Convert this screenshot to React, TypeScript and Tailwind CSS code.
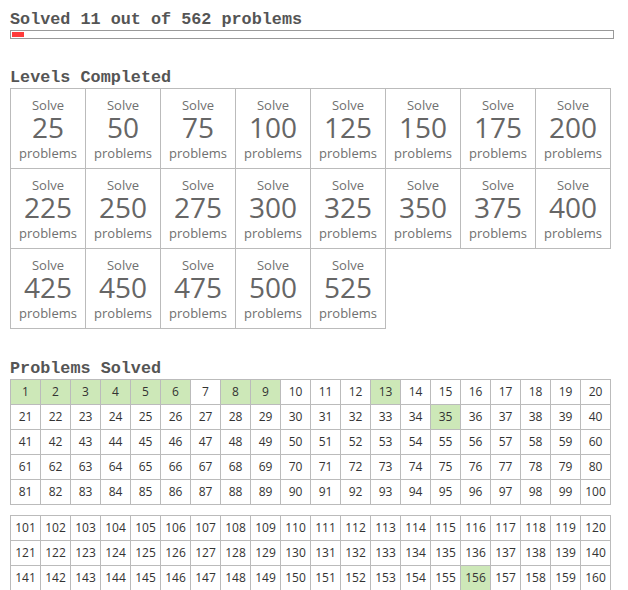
import React from "react";

const levels = [25, 50, 75, 100, 125, 150, 175, 200, 225, 250, 275, 300, 325, 350, 375, 400, 425, 450, 475, 500, 525];
const solved = new Set([1, 2, 3, 4, 5, 6, 8, 9, 13, 35, 156]);

function ProblemGrid({ from, to }: { from: number; to: number }) {
  const nums: number[] = [];
  for (let i = from; i <= to; i++) nums.push(i);
  return (
    <div className="grid w-[601px] grid-cols-[repeat(20,30px)] border-l border-t border-[#bbbbbb]">
      {nums.map((n) => (
        <div
          key={n}
          className={`flex h-[25px] items-center justify-center border-b border-r border-[#bbbbbb] text-[12px] text-[#333333] ${
            solved.has(n) ? "bg-[#cde8b8]" : "bg-white"
          }`}
        >
          {n}
        </div>
      ))}
    </div>
  );
}

export default function App() {
  const heading = "font-['Liberation_Mono','Courier_New',monospace] font-bold text-[16.8px] leading-[19px] text-[#555555]";
  return (
    <div className="min-h-[590px] bg-white px-[10px] pt-[10px] font-['Open_Sans',sans-serif]">
      <div className={heading}>Solved 11 out of 562 problems</div>
      <div className="mt-px h-[9px] w-[604px] border border-[#999999] p-px">
        <div className="h-full bg-[#ff3b3b]" style={{ width: `${Math.round((11 / 562) * 600)}px` }} />
      </div>

      <div className={`${heading} mt-[29px]`}>Levels Completed</div>
      <div className="mt-px w-[601px]">
        <div className="grid grid-cols-[repeat(8,75px)] border-l border-t border-[#bbbbbb]">
          {levels.map((l) => (
            <div
              key={l}
              className="flex h-[80px] flex-col items-center border-b border-r border-[#bbbbbb] pt-[8px] text-[#707070]"
            >
              <div className="h-[16px] text-[13px] leading-[16px]">Solve</div>
              <div className="h-[28px] text-[28px] leading-[28px] text-[#666666]">{l}</div>
              <div className="mt-[4px] h-[16px] text-[13px] leading-[16px]">problems</div>
            </div>
          ))}
        </div>
      </div>

      <div className={`${heading} mt-[30px]`}>Problems Solved</div>
      <div className="mt-px">
        <ProblemGrid from={1} to={100} />
      </div>
      <div className="mt-[10px]">
        <ProblemGrid from={101} to={160} />
      </div>
    </div>
  );
}
